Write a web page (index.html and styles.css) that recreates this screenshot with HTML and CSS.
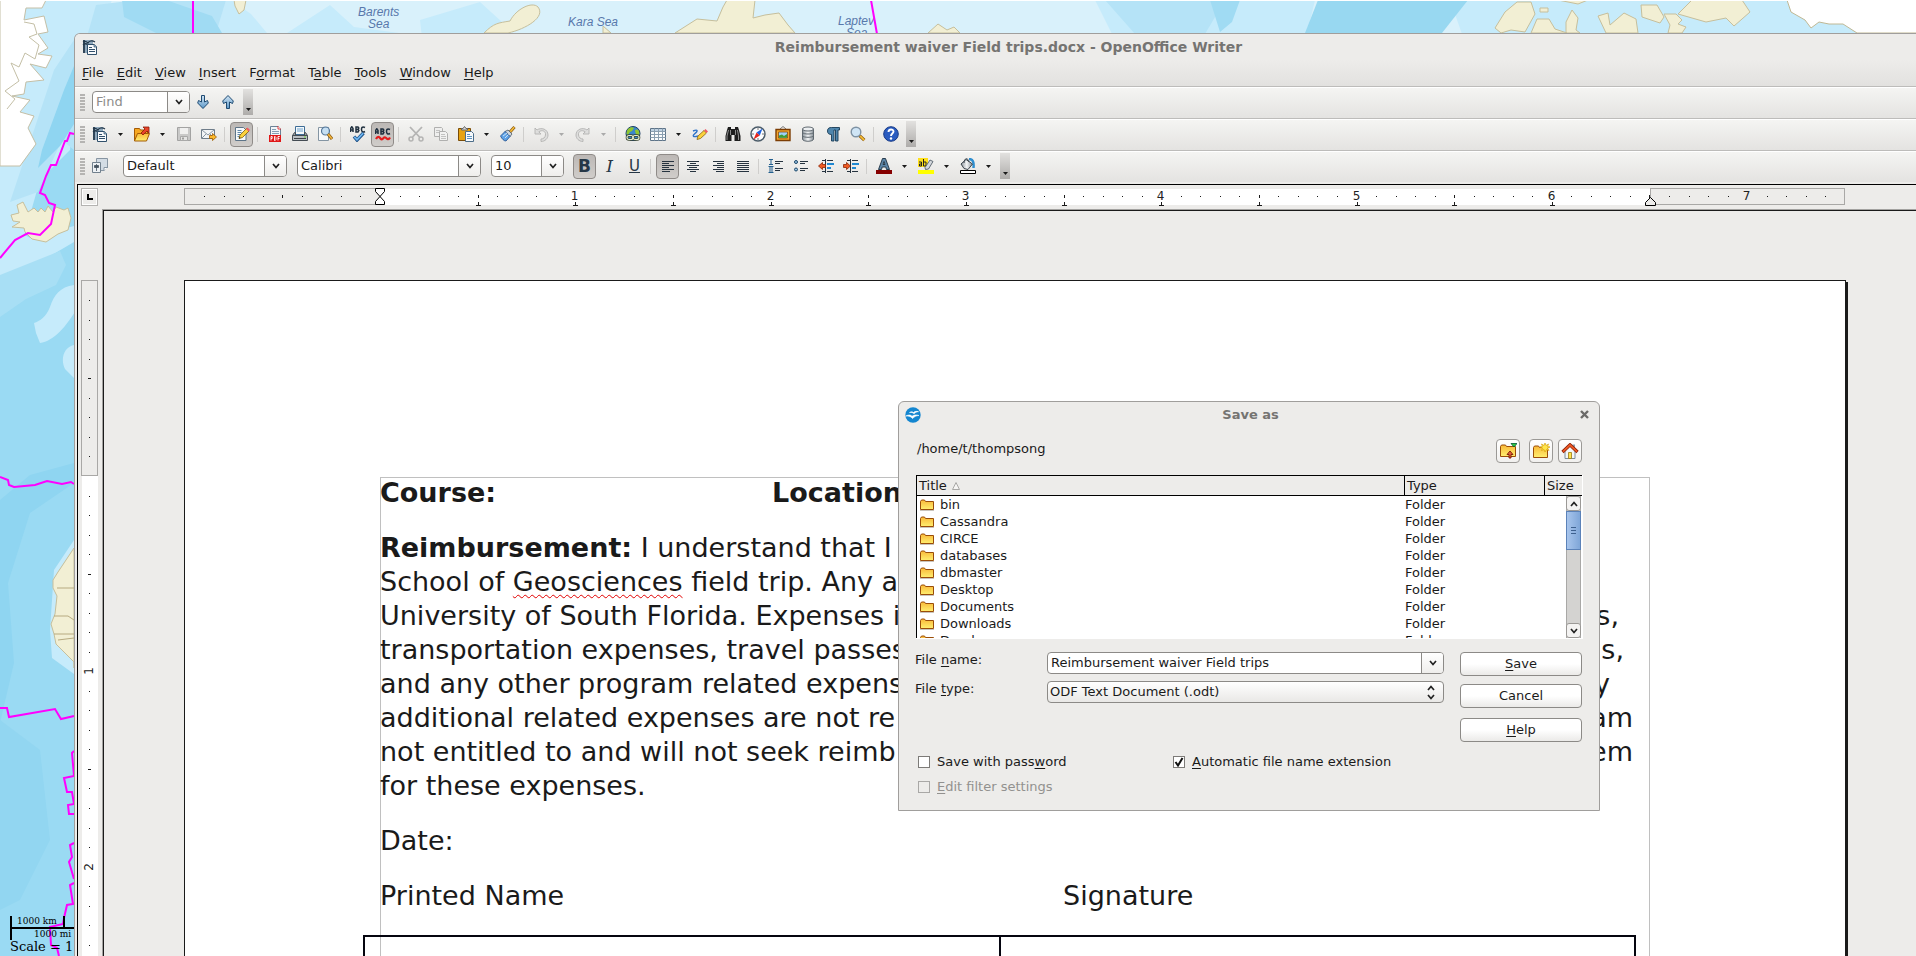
FILE: index.html
```html
<!DOCTYPE html>
<html lang="en">
<head>
<meta charset="utf-8">
<title>Reimbursement waiver Field trips.docx - OpenOffice Writer</title>
<link rel="stylesheet" href="styles.css">
</head>
<body>

<svg class="symbols" aria-hidden="true">
  <defs>
    <linearGradient id="g-blue" x1="0" y1="0" x2="0" y2="1"><stop offset="0" stop-color="#d3e6f5"/><stop offset="1" stop-color="#5b97c8"/></linearGradient>
    <linearGradient id="g-fold" x1="0" y1="0" x2="0" y2="1"><stop offset="0" stop-color="#f9b838"/><stop offset="1" stop-color="#ffef70"/></linearGradient>
    <linearGradient id="g-steel" x1="0" y1="0" x2="1" y2="0"><stop offset="0" stop-color="#8a939a"/><stop offset=".5" stop-color="#f4f6f7"/><stop offset="1" stop-color="#868f96"/></linearGradient>
  </defs>
  <symbol id="i-writer" viewBox="0 0 16 16"><path d="M1 1h2v13H1z" fill="#31475a"/><path d="M3 1h8v4H6v9H3z" fill="#8fa9bd"/><path d="M1 3c3-2 4 0 5 1 1-2 4-3 7-1M1 6c2-2 4-1 5 0" fill="none" stroke="#24394b" stroke-width="1.200"/><path d="M5.500 5.500h7l2 2v8h-9z" fill="#f8fafc" stroke="#31506b"/><path d="M7 8.500h3M7 10.500h6M7 12.500h6" stroke="#31506b"/><path d="M12 5v3h3" fill="#9fb8cc" stroke="#31506b" stroke-width=".7"/></symbol>
  <symbol id="i-open" viewBox="0 0 16 16"><path d="M.5 15V2.500h5l1 1.500h7v3" fill="#f7a821" stroke="#a35a06"/><path d="M.5 15l3-7.500h12l-3 7.500z" fill="url(#g-fold)" stroke="#a35a06"/><path d="M7 7l4-4-2-2h6v6l-2-2-4 4z" fill="#e8442a" stroke="#8a1a06" stroke-width=".8"/></symbol>
  <symbol id="i-save" viewBox="0 0 16 16"><path d="M1.500 1.500h13v13h-13z" fill="#c9c9c8" stroke="#a3a3a2"/><path d="M4 2h8v6H4z" fill="#f0f0ef"/><path d="M4.500 10.500h7v4h-7z" fill="#e4e4e3" stroke="#a9a9a8"/><path d="M6 11.500h2v2H6z" fill="#9d9d9c"/></symbol>
  <symbol id="i-mail" viewBox="0 0 16 16"><path d="M.5 3.500h13v9H.5z" fill="#f2f4f6" stroke="#6f7d8a"/><path d="M1 4l6 5 6-5M1 12l4-4M13 12L9 8" fill="none" stroke="#8b98a4"/><path d="M8.500 9.500h3v-2l4 3.500-4 3.500v-2h-3z" fill="#fdb92a" stroke="#9a5a06" stroke-width=".8"/></symbol>
  <symbol id="i-edit" viewBox="0 0 16 16"><path d="M1.500 1.500h8l2.500 2.500v10.500H1.500z" fill="#f6f9fb" stroke="#5d7488"/><path d="M3.500 4.500h4M3.500 6.500h4M3.500 8.500h3M3.500 10.500h2" stroke="#5f86a8"/><path d="M5 12.500l1-3.500L12.500 2.500l2.500 2.500L8.500 11.500z" fill="#fbd23c" stroke="#7a5a10" stroke-width=".8"/><path d="M12 3l2.500 2.500L16 4 13.500 1.500z" fill="#ef5a67"/><path d="M5 12.500l.5-1.500 1 1z" fill="#111"/></symbol>
  <symbol id="i-pdf" viewBox="0 0 16 16"><path d="M3.500.5h8l2 2v7h-10z" fill="#f2f6f9" stroke="#6b8297"/><path d="M5 3.500h4M5 5.500h7M5 7.500h7" stroke="#86a0b6"/><path d="M2 9h12v7H2z" fill="#e01717"/><path d="M11 0v3h3" fill="#fff" stroke="#e01717" stroke-width=".8"/><path d="M4 14.500v-4h1.200v2H4M7.500 10.500v4h.7l.8-1v-2l-.8-1zM11 14.500v-4h1.800M11 12.500h1.500" fill="none" stroke="#fff" stroke-width=".9"/></symbol>
  <symbol id="i-print" viewBox="0 0 16 16"><path d="M3.500.5h9v8h-9z" fill="#f4f9fc" stroke="#3e6d96"/><path d="M5 3h6M5 5h6" stroke="#6ea2cb"/><path d="M.5 9.500l2-3h1v3h9v-3h1l2 3z" fill="#9aa2a8" stroke="#444c53"/><path d="M.5 9.500h15v5H.5z" fill="#b9bec2" stroke="#444c53"/><path d="M2 12.500h12" stroke="#3b4247"/><path d="M12 10.500h2v1h-2z" fill="#6ad23a"/></symbol>
  <symbol id="i-preview" viewBox="0 0 16 16"><path d="M1.500 1.500h10v13h-10z" fill="#f7f9fb" stroke="#8495a3"/><circle cx="8.500" cy="5" r="4" fill="#bfdcf2" fill-opacity=".9" stroke="#56789a" stroke-width="1.200"/><path d="M11 8l4 5" stroke="#8a5a10" stroke-width="3"/><path d="M11.200 8.200l3.600 4.600" stroke="#f4b53a" stroke-width="1.600"/></symbol>
  <symbol id="i-abc" viewBox="0 0 16 16"><path d="M.5 6V2.500L1.800.7 3 2.500V6M.5 4H3M6 1h2l.8 1-.8 1.300.9 1.300L8 6H6zM6 3.400h2M15 1.500C12 0 11.500 2 11.500 3.500S12.500 7 15 5.500" fill="none" stroke="#20303f" stroke-width="1.500"/></symbol>
  <symbol id="i-spell" viewBox="0 0 16 16"><use href="#i-abc"/><path d="M4 10.500l3 3.500 6.500-7" fill="none" stroke="#1c4f86" stroke-width="3.400"/><path d="M4.300 10.800L7 13.700l6.200-6.500" fill="none" stroke="#6cb4ee" stroke-width="1.700"/></symbol>
  <symbol id="i-auto" viewBox="0 0 16 16"><g transform="translate(0 2)"><use href="#i-abc"/></g><path d="M1 13c1.500-3 3-2.500 4.500-.5s2.500 0 3.500-1 2.500 1 3.500 1.500 2-.5 2.500-1.500" fill="none" stroke="#e21d1d" stroke-width="2.200"/></symbol>
  <symbol id="i-cut" viewBox="0 0 16 16"><path d="M2 1l9.500 10M14 1L4.500 11" stroke="#b4b4b3" stroke-width="1.800"/><circle cx="3" cy="13" r="2" fill="none" stroke="#b4b4b3" stroke-width="1.500"/><circle cx="13" cy="13" r="2" fill="none" stroke="#b4b4b3" stroke-width="1.500"/></symbol>
  <symbol id="i-copy" viewBox="0 0 16 16"><path d="M1.500 1.500h7l1 1v8h-8z" fill="#efefee" stroke="#b0b0af"/><path d="M6.500 5.500h6l2 2v7h-8z" fill="#f2f2f1" stroke="#b0b0af"/><path d="M3 4.500h4M3 6.500h3M8 8.500h4M8 10.500h5M8 12.500h5" stroke="#c2c2c1"/></symbol>
  <symbol id="i-paste" viewBox="0 0 16 16"><path d="M.5 2.500h12v12H.5z" fill="#e7a312" stroke="#7a4d08"/><path d="M3.500 4V2.500h1.500L6.500.5l1.500 2h1.500V4z" fill="#d8dcdf" stroke="#666"/><path d="M7.500 5.500h6l2 2v8h-8z" fill="#f7fafc" stroke="#4c6d89"/><path d="M9 8.500h3M9 10.500h5M9 12.500h5" stroke="#5f93bf"/></symbol>
  <symbol id="i-brush" viewBox="0 0 16 16"><path d="M10 6l4.500-5" stroke="#8a5a10" stroke-width="3"/><path d="M10.300 5.700L14.200 1.300" stroke="#f6bd3a" stroke-width="1.600"/><path d="M8 4l4 4-2 2.500-5-5z" fill="#cfd5da" stroke="#47586a" stroke-width=".8"/><path d="M5 5.500l5 5L6 15c-2 0-4-2-5.500-5z" fill="#5fa2e6" stroke="#1f4c8c" stroke-width=".8"/><path d="M3 10l4-3M5 12l3.500-3.500" stroke="#c9e1f7"/></symbol>
  <symbol id="i-undo" viewBox="0 0 16 16"><path d="M2 2v6h6L5.800 5.800C9 3.500 13 5 12.500 9c-.3 2.500-2 4-4.500 4v2.500c4 0 7-3 7-6.500 0-6-7-8-11-5z" fill="#dededd" stroke="#b3b3b2" stroke-width=".9"/></symbol>
  <symbol id="i-redo" viewBox="0 0 16 16"><g transform="matrix(-1 0 0 1 16 0)"><use href="#i-undo"/></g></symbol>
  <symbol id="i-link" viewBox="0 0 16 16"><circle cx="8" cy="7.500" r="7" fill="#3a86cc" stroke="#1c3f66"/><path d="M3 3c2-2 5-2 6-1L7 5 5 6 3 9 1.500 8c0-2 .5-4 1.500-5zM10 4c2-1 3-.5 4 1l.5 3-2 2-2-3z" fill="#8fc62f"/><rect x="2" y="9.500" width="6" height="4" rx="2" fill="none" stroke="#33402a" stroke-width="2.600"/><rect x="8" y="9.500" width="6" height="4" rx="2" fill="none" stroke="#33402a" stroke-width="2.600"/><rect x="2" y="9.500" width="6" height="4" rx="2" fill="none" stroke="#e4ecd2" stroke-width="1.200"/><rect x="8" y="9.500" width="6" height="4" rx="2" fill="none" stroke="#e4ecd2" stroke-width="1.200"/></symbol>
  <symbol id="i-table" viewBox="0 0 16 16"><path d="M.5 2.500h15v12H.5z" fill="#fafcfd" stroke="#5e7488"/><path d="M1 3h14v2H1z" fill="#bfd2e2"/><path d="M.5 5.500h15M.5 8.500h15M.5 11.500h15M4.500 2.500v12M8.500 2.500v12M12.500 2.500v12" stroke="#8b9fb0"/></symbol>
  <symbol id="i-draw" viewBox="0 0 16 16"><path d="M1 5c5-2 5 0 2 2.500s-2 4 3 2.500" fill="none" stroke="#2f74c9" stroke-width="1.500"/><path d="M5 13.500l1-3.500 6-5.500 2.500 2.500L8.500 12.500z" fill="#fbd23c" stroke="#8a6410" stroke-width=".8"/><path d="M12 4.500l2.500 2.500L16 5.500 13.500 3z" fill="#ef5a67"/></symbol>
  <symbol id="i-bino" viewBox="0 0 16 16"><path d="M3 1h3v2h4V1h3l1 3 1.500 6v5h-6V9h-3v6h-6v-5L2 4z" fill="#1d1d1d"/><path d="M3.500 4L2 10v4M12.500 4l1 6v4M5.500 4v5M10.500 4v5" stroke="#8d8d8d" fill="none"/></symbol>
  <symbol id="i-nav" viewBox="0 0 16 16"><circle cx="8" cy="8" r="7" fill="#fbfcfd" stroke="#4c5c69" stroke-width="1.500"/><path d="M8 2v2M8 12v2M2 8h2M12 8h2" stroke="#777"/><path d="M12.500 2.500L9.800 9.500 6.500 6.500z" fill="#1f63e0"/><path d="M3.500 13.500l3-7 3.300 3z" fill="#e8261c"/></symbol>
  <symbol id="i-gallery" viewBox="0 0 16 16"><path d="M5 3l3-2.500L11 3" fill="none" stroke="#777"/><path d="M1 3.500h14v11H1z" fill="#f2a62a" stroke="#7c3d04" stroke-width="1.400"/><path d="M3.500 6h9v6h-9z" fill="#9fd0f5" stroke="#7c3d04" stroke-width=".7"/><path d="M4 11.800V9.500l3-1 2 1.500 3-2v3.800z" fill="#3f9c34"/></symbol>
  <symbol id="i-db" viewBox="0 0 16 16"><path d="M2.500 3v10c0 3 11 3 11 0V3z" fill="url(#g-steel)" stroke="#606970"/><path d="M2.500 6.500c1 2 10 2 11 0M2.500 9.800c1 2 10 2 11 0" fill="none" stroke="#606970"/><ellipse cx="8" cy="3" rx="5.500" ry="2" fill="#eceff1" stroke="#606970"/></symbol>
  <symbol id="i-para" viewBox="0 0 16 16"><path d="M2.500 5c0-3 2-3.500 4-3.500h8V4H13v11h-2.500V4H9v11H6.500V8.500c-2.500 0-4-1-4-3.500z" fill="#4f86ad" stroke="#173a55" stroke-width=".9"/></symbol>
  <symbol id="i-zoom" viewBox="0 0 16 16"><circle cx="6" cy="6" r="4.800" fill="#cfe5f6" stroke="#7e92a4" stroke-width="1.400"/><path d="M9.800 9.800l4.500 4.400" stroke="#8a5a10" stroke-width="3.200"/><path d="M10.200 10.200l4 3.900" stroke="#f8bf34" stroke-width="1.700"/></symbol>
  <symbol id="i-help" viewBox="0 0 16 16"><circle cx="8" cy="8" r="7.300" fill="#2a5cc0" stroke="#173a86"/><path d="M5.500 6c0-3.300 5-3.200 5-.4C10.500 7.500 8 7.600 8 10" fill="none" stroke="#fff" stroke-width="1.900"/><circle cx="8" cy="12.500" r="1.200" fill="#fff"/></symbol>
  <symbol id="i-styles" viewBox="0 0 16 16"><path d="M4.500.5h11v9l-3 3h-8z" fill="#d3dce4" stroke="#8795a2"/><path d="M12 13V9.500h4" fill="#fff" stroke="#8795a2"/><path d="M.5 4.500h8v10h-8z" fill="#edf1f4" stroke="#71808d"/><path d="M4.500 6v7M2.500 7.500h4v2h-4z" fill="#44525e" stroke="#44525e" stroke-width=".8"/></symbol>
  <symbol id="i-al" viewBox="0 0 16 16"><path d="M2 3.500h12M2 5.500h7M2 7.500h12M2 9.500h7M2 11.500h12M2 13.500h8" stroke="#26333f"/></symbol>
  <symbol id="i-ac" viewBox="0 0 16 16"><path d="M2 3.500h12M5 5.500h6M2 7.500h12M4 9.500h8M2 11.500h12M5 13.500h6" stroke="#26333f"/></symbol>
  <symbol id="i-ar" viewBox="0 0 16 16"><path d="M3 3.500h11M7 5.500h7M3 7.500h11M7 9.500h7M3 11.500h11M6 13.500h8" stroke="#26333f"/></symbol>
  <symbol id="i-aj" viewBox="0 0 16 16"><path d="M2 3.500h12M2 5.500h12M2 7.500h12M2 9.500h12M2 11.500h12M2 13.500h12" stroke="#26333f"/></symbol>
  <symbol id="i-num" viewBox="0 0 16 16"><path d="M1 1.500h4M3 2v4M1 6.500h4M.5 8.500h5M2 9v5M4 9v5M.5 14.500h5" stroke="#24608f"/><path d="M7 3.500h8M7 5.500h5M7 10.500h8M7 12.500h5" stroke="#26333f"/></symbol>
  <symbol id="i-bul" viewBox="0 0 16 16"><circle cx="3" cy="4" r="1.500" fill="#9cc6e4" stroke="#1d486b"/><circle cx="3" cy="11.500" r="1.500" fill="#9cc6e4" stroke="#1d486b"/><path d="M7 3.500h8M7 5.500h5M7 10.500h8M7 12.500h5" stroke="#26333f"/></symbol>
  <symbol id="i-dec" viewBox="0 0 16 16"><path d="M4 2.500h3M9 2.500h6M4 13.500h3M9 13.500h6M7.500 1v14" stroke="#26333f"/><path d="M9 5h7v2H9zM9 9h4v2H9z" fill="#1f88d2"/><path d="M.5 8l4-3.500v2h3v3h-3v2z" fill="#ef5a22" stroke="#8c2606" stroke-width=".8"/></symbol>
  <symbol id="i-inc" viewBox="0 0 16 16"><path d="M4 2.500h3M9 2.500h6M4 13.500h3M9 13.500h6M7.500 1v14" stroke="#26333f"/><path d="M9 5h7v2H9zM9 9h4v2H9z" fill="#1f88d2"/><path d="M7.500 8l-4-3.500v2h-3v3h3v2z" fill="#ef5a22" stroke="#8c2606" stroke-width=".8"/></symbol>
  <symbol id="i-fcol" viewBox="0 0 16 16"><path d="M2.500 11.500L6.500.5h3l4 11h-3l-.7-2.500H6.200l-.7 2.500zM7 6.500h2L8 3.500z" fill="#5d86a8" stroke="#1c2f40" stroke-width=".9"/><path d="M0 12h16v4H0z" fill="#860000"/></symbol>
  <symbol id="i-hl" viewBox="0 0 16 16"><path d="M0 0h10v9H0z" fill="#ffe11a"/><path d="M1 4h2.500v4H1.500V6h2M5.500 1v7h2.500V4H5.500" fill="none" stroke="#222"/><path d="M7 9.500l5-7.500 3 1.500-4.500 7.500-3 .5z" fill="#d4d8dc" stroke="#55606a" stroke-width=".9"/><path d="M0 12h16v4H0z" fill="#ffff00"/></symbol>
  <symbol id="i-bg" viewBox="0 0 16 16"><path d="M9 1c4 0 5 3 4.500 9" fill="none" stroke="#2f8fd0" stroke-width="2.500"/><path d="M1 6l5-4.500L12.500 6 8 11.500 4 10.500z" fill="url(#g-steel)" stroke="#3a444d"/><path d="M4 5c0-5 4-6 5-1" fill="none" stroke="#3a444d"/><path d="M.5 12.500h15v3H.5z" fill="#fff" stroke="#000"/></symbol>
  <symbol id="i-down" viewBox="0 0 16 16"><path d="M6.500 1.500h3V8l3-1.500.8 2.500L8 14.500 2.700 9l.8-2.500 3 1.500z" fill="url(#g-blue)" stroke="#1f4b72"/></symbol>
  <symbol id="i-up" viewBox="0 0 16 16"><path d="M6.500 14.500h3V8l3 1.500.8-2.500L8 1.500 2.700 7l.8 2.500 3-1.500z" fill="url(#g-blue)" stroke="#1f4b72"/></symbol>
  <symbol id="i-folder" viewBox="0 0 14 12"><path d="M.5 10.500v-8l1-1.500h3l1 1.500h8v8z" fill="url(#g-fold)" stroke="#9a4d08"/><path d="M0 11.500h14" stroke="#c9c4bd"/></symbol>
  <symbol id="i-levelup" viewBox="0 0 18 16"><path d="M1.500 13.500V3.500l1-1.500h4l1 1.500h9v10z" fill="url(#g-fold)" stroke="#9a4d08"/><path d="M10 15v-3.500H8l3-3.500 3 3.500h-2V15z" fill="#e2603a" stroke="#7a1a06" stroke-width=".9"/><path d="M12 .5h6l-3 3.500z" fill="#2ecc40" stroke="#053" stroke-width=".8"/></symbol>
  <symbol id="i-newdir" viewBox="0 0 18 16"><path d="M1.500 14.500V4.500l1-1.500h4l1 1.500h8v10z" fill="url(#g-fold)" stroke="#9a4d08"/><path d="M13 0l1 2.500L16.500 1l-1 2.500 2.500.5-2.500 1 1.500 2.500-2.500-1L13 9l-1-2.500-2.500 1 1-2.500L8 4l2.500-.5L9.500 1 12 2.500z" fill="#ffe54a" stroke="#d8a40c" stroke-width=".7"/></symbol>
  <symbol id="i-home" viewBox="0 0 18 16"><path d="M11.500 1.500h2.500v4h-2.500z" fill="#8fa1b2"/><path d="M4 8l5-5 5 5v7.500H4z" fill="#f3f6f9" stroke="#7d8c9a"/><path d="M7.500 9.500h3v6h-3z" fill="#ffe34d" stroke="#9a7a10" stroke-width=".8"/><path d="M1.500 9L9 1.800 16.500 9" fill="none" stroke="#8c1f06" stroke-width="3.200"/><path d="M2 8.600L9 1.900 16 8.600" fill="none" stroke="#f05a25" stroke-width="1.800"/></symbol>
  <symbol id="i-oo" viewBox="0 0 16 16"><circle cx="8" cy="8" r="7.700" fill="#1486d0"/><path d="M4.500 5.500c2-1.200 3-.8 4 0 1-1 3-1.500 5-.8-2 0-3.200.8-4.500 2C7.800 5.600 6.500 5.200 4.500 5.500zM.8 9c3-1.500 5-1.200 6.200.3 1.500-1.300 4-1.800 7-.8-3 .1-4.500 1.200-6.500 3C6 9.500 4 8.700.8 9z" fill="#fff" stroke="#fff" stroke-width=".6"/></symbol>
  <symbol id="i-chev" viewBox="0 0 8 6"><path d="M1 1l3 3.500L7 1" fill="none" stroke="#222" stroke-width="1.700"/></symbol>
  <symbol id="i-chevup" viewBox="0 0 8 6"><path d="M1 5l3-3.500L7 5" fill="none" stroke="#222" stroke-width="1.700"/></symbol>
  <symbol id="i-tri" viewBox="0 0 5 3"><path d="M0 0h5L2.500 3z" fill="currentColor"/></symbol>
</svg>

<svg class="map" role="img" aria-label="World map">
  <rect width="100%" height="100%" fill="#9adaf3"/>
  <rect width="100%" height="40" fill="#d9f1fb"/>
  <g fill="#c6ebfb">
    <path d="M0 0h112l-6 16 8 17-34 6L70 150 40 180 20 250 0 300z"/>
    <path d="M205 0h26l20 14 16 19h-64l-4-20zM330 5l24 22 60 8-50 4-80-4zM420 20l60-18 22 20-20 14-60 2z"/>
    <path d="M1095 0h220l-8 34h-195zM1450 0h466v34H1462z"/>
    <path d="M74 285c-14 2-20 10-24 22-4 10-10 14-16 16l2 10 4 10c14-2 26-16 38-36zM74 345c-10 2-14 14-9 24l9 9zM74 540l-20 30-4 60 2 28 22 16z"/>
    <path d="M0 220l30 18 44-12v16L40 262 12 274 0 270z"/>
  </g>
  <g fill="#b5e3f7">
    <path d="M54 70l20-30v110l-12-10-24 52-28 10 20-60zM1105 0h120l-20 34h-70z"/>
    <path d="M96 5l40-5h90l-10 33H88z"/>
  </g>
  <path d="M0 275l60-24 6 14-10 20-30 14-26 18z" fill="#a8dff5"/>
  <path d="M122 0h44l46 16 10 17h-66l-32-16zM1210 0h30l-8 22-12 10z" fill="#a0dbf3"/>
  <path d="M1318 0h150l-26 33H1305z" fill="#98d8f1"/>
  <path d="M64 90l10-24v58l-14 22-22 22 4-18zM0 500l30-25 44-12v20l-44 30-22 70 6 80-14 60z" fill="#8fd5f1"/>
  <path d="M0 720l40 30 10 90-30 60-20 10z" fill="#92d6f1"/>
  <path d="M0 0h46l-4 8-16 0-2 12 20-4 4 16-10 2 10 14-10 6 14 2-6 12-16-4 14 16-18 2-2 12-12 2 18 4-10 12 14 4-6 12 8 16-16 22L0 166z" fill="#fff" stroke="#c4bfa6"/>
  <path d="M24 22l10 2 3 10-8 3 10 8-4 14-10-6-6 14-8-4 8 18-14 10 10 8-8 10" fill="none" stroke="#c4bfa6"/>
  <g fill="#f2efd4" stroke="#c6bf9c">
    <path d="M11 215l8-2-2-8 6-3 5 10 6-4 4 4 3-4 4 4 3-6 5 6 3-5 8 3 4-2 3 10-3 12-10 4-12 8-14-3-7-7-1-4-12-1 8-5-7-1z"/>
    <path d="M74 548l-8 12-8 12-5 8 0 8 4 8-2 18-4 10 3 10 2 10 8 8 10 10v6z"/>
    <path d="M234 0h12l-2 10-5 4-4-8zM484 33c10-10 14-10 26-12 6-12 22-20 28-14 8 10-12 22-30 26zM611 33l-8-7v7z"/>
    <path d="M675 33l22-14 20 2 6-14 4-7h28l-2 18 12-3 14-2 9 12 7 8z"/>
    <path d="M928 33l10-9 9 6 7-3 6 6zM1495 28l10-16 12-10h14l4 12-10 18-14-2-10 3zM1531 33l6-14 12 0 6 10 12 4zM1566 22l6-12 6 8-2 12 4 3h-14z"/>
    <path d="M1598 16l10-3 2 12 14-12 12 6 2 14h-32zM1641 5l16 0 7 12-4 6-18-6zM1664 14l12 0 6 6-4 4 8 3-4 6h-14l2-8zM1678 14l14-14h50l8 12-16 14-8-8-20 4z"/>
    <path d="M1540 8h8v4h-8zM1558 0h30l-10 4z"/>
  </g>
  <path d="M57 588h17M54 616l14 0 6 4M54 634h20M58 640l16-2" fill="none" stroke="#b7aa80"/>
  <path d="M1787 0l4 12 14 8 6 8 8-6 10 2 14 0 14 9h69V0z" fill="#fff" stroke="#c0b894"/>
  <g class="sea-label">
    <text x="358" y="16">Barents</text><text x="368" y="28">Sea</text>
    <text x="568" y="26">Kara Sea</text>
    <text x="838" y="25">Laptev</text><text x="846" y="37">Sea</text>
  </g>
  <path d="M193 0v34M871 0l6 34M74 134l-4-1-3 8h-2l-9 24h-5l-5 11-6 17 5 2 4 8 6 2-4 19-11 11-12-2-13 7L0 258M0 477l8 3 1 5 5 2 21-2 12-4 15 3 9-2 3 2M0 708h7l2 9 46-8 6 10 13-3M74 751l-2 2 2 23-10 2 3 14h5l2 12-6 1 1 9 5 0M74 843l-4 2 2 12-3 5 5 17M74 883l-4 2 3 19-6 1-3 13-1 6-13 3 1 18 6 3 2 8" fill="none" stroke="#f0f" stroke-width="2"/>
  <path d="M11 916v24M11 928h63M64 916v12" fill="none" stroke="#000" stroke-width="2"/>
  <g class="scale-label"><text x="17" y="924">1000 km</text><text x="34" y="937">1000 mi</text><text class="big" x="10" y="951">Scale = 1:</text></g>
  <rect width="100%" height="1" fill="#fff"/>
</svg>

<main class="window">
  <header class="head">
    <div class="titlebar"><svg class="icon"><use href="#i-writer"/></svg><h1>Reimbursement waiver Field trips.docx - OpenOffice Writer</h1></div>
    <nav class="menubar">
      <button><u>F</u>ile</button><button><u>E</u>dit</button><button><u>V</u>iew</button><button><u>I</u>nsert</button><button>F<u>o</u>rmat</button><button>T<u>a</u>ble</button><button><u>T</u>ools</button><button><u>W</u>indow</button><button><u>H</u>elp</button>
    </nav>
  </header>

  <div class="toolbar">
    <span class="grip"></span>
    <div class="combo find"><input type="text" placeholder="Find" aria-label="Find"><button aria-label="Find history"><svg><use href="#i-chev"/></svg></button></div>
    <button class="tool" aria-label="Find next"><svg class="icon"><use href="#i-down"/></svg></button>
    <button class="tool" aria-label="Find previous"><svg class="icon"><use href="#i-up"/></svg></button>
    <button class="more" aria-label="More"><svg><use href="#i-tri"/></svg></button>
  </div>

  <div class="toolbar">
    <span class="grip"></span>
    <button class="tool" aria-label="New"><svg class="icon"><use href="#i-writer"/></svg></button><button class="drop" aria-label="New options"><svg><use href="#i-tri"/></svg></button>
    <button class="tool" aria-label="Open"><svg class="icon"><use href="#i-open"/></svg></button><button class="drop" aria-label="Open options"><svg><use href="#i-tri"/></svg></button>
    <button class="tool" aria-label="Save" disabled><svg class="icon"><use href="#i-save"/></svg></button>
    <button class="tool" aria-label="E-mail"><svg class="icon"><use href="#i-mail"/></svg></button>
    <i class="sep"></i>
    <button class="tool on" aria-label="Edit file"><svg class="icon"><use href="#i-edit"/></svg></button>
    <i class="sep"></i>
    <button class="tool" aria-label="Export as PDF"><svg class="icon"><use href="#i-pdf"/></svg></button>
    <button class="tool" aria-label="Print"><svg class="icon"><use href="#i-print"/></svg></button>
    <button class="tool" aria-label="Page preview"><svg class="icon"><use href="#i-preview"/></svg></button>
    <i class="sep"></i>
    <button class="tool" aria-label="Spelling"><svg class="icon"><use href="#i-spell"/></svg></button>
    <button class="tool on" aria-label="AutoSpellcheck"><svg class="icon"><use href="#i-auto"/></svg></button>
    <i class="sep"></i>
    <button class="tool" aria-label="Cut" disabled><svg class="icon"><use href="#i-cut"/></svg></button>
    <button class="tool" aria-label="Copy" disabled><svg class="icon"><use href="#i-copy"/></svg></button>
    <button class="tool" aria-label="Paste"><svg class="icon"><use href="#i-paste"/></svg></button><button class="drop" aria-label="Paste options"><svg><use href="#i-tri"/></svg></button>
    <button class="tool" aria-label="Format paintbrush"><svg class="icon"><use href="#i-brush"/></svg></button>
    <i class="sep"></i>
    <button class="tool" aria-label="Undo" disabled><svg class="icon"><use href="#i-undo"/></svg></button><button class="drop" aria-label="Undo options" disabled><svg><use href="#i-tri"/></svg></button>
    <button class="tool" aria-label="Redo" disabled><svg class="icon"><use href="#i-redo"/></svg></button><button class="drop" aria-label="Redo options" disabled><svg><use href="#i-tri"/></svg></button>
    <i class="sep"></i>
    <button class="tool" aria-label="Hyperlink"><svg class="icon"><use href="#i-link"/></svg></button>
    <button class="tool" aria-label="Table"><svg class="icon"><use href="#i-table"/></svg></button><button class="drop" aria-label="Table options"><svg><use href="#i-tri"/></svg></button>
    <button class="tool" aria-label="Draw functions"><svg class="icon"><use href="#i-draw"/></svg></button>
    <i class="sep"></i>
    <button class="tool" aria-label="Find and replace"><svg class="icon"><use href="#i-bino"/></svg></button>
    <button class="tool" aria-label="Navigator"><svg class="icon"><use href="#i-nav"/></svg></button>
    <button class="tool" aria-label="Gallery"><svg class="icon"><use href="#i-gallery"/></svg></button>
    <button class="tool" aria-label="Data sources"><svg class="icon"><use href="#i-db"/></svg></button>
    <button class="tool" aria-label="Nonprinting characters"><svg class="icon"><use href="#i-para"/></svg></button>
    <button class="tool" aria-label="Zoom"><svg class="icon"><use href="#i-zoom"/></svg></button>
    <i class="sep"></i>
    <button class="tool" aria-label="Help"><svg class="icon"><use href="#i-help"/></svg></button>
    <button class="more" aria-label="More"><svg><use href="#i-tri"/></svg></button>
  </div>

  <div class="toolbar">
    <span class="grip"></span>
    <button class="tool" aria-label="Styles and formatting"><svg class="icon"><use href="#i-styles"/></svg></button>
    <div class="combo style"><input type="text" value="Default" aria-label="Style"><button aria-label="Styles"><svg><use href="#i-chev"/></svg></button></div>
    <div class="combo font"><input type="text" value="Calibri" aria-label="Font name"><button aria-label="Fonts"><svg><use href="#i-chev"/></svg></button></div>
    <div class="combo size"><input type="text" value="10" aria-label="Font size"><button aria-label="Sizes"><svg><use href="#i-chev"/></svg></button></div>
    <button class="tool on glyph bold" aria-label="Bold">B</button>
    <button class="tool glyph italic" aria-label="Italic">I</button>
    <button class="tool glyph under" aria-label="Underline">U</button>
    <i class="sep"></i>
    <button class="tool on" aria-label="Align left"><svg class="icon"><use href="#i-al"/></svg></button>
    <button class="tool" aria-label="Center"><svg class="icon"><use href="#i-ac"/></svg></button>
    <button class="tool" aria-label="Align right"><svg class="icon"><use href="#i-ar"/></svg></button>
    <button class="tool" aria-label="Justify"><svg class="icon"><use href="#i-aj"/></svg></button>
    <i class="sep"></i>
    <button class="tool" aria-label="Numbering"><svg class="icon"><use href="#i-num"/></svg></button>
    <button class="tool" aria-label="Bullets"><svg class="icon"><use href="#i-bul"/></svg></button>
    <button class="tool" aria-label="Decrease indent"><svg class="icon"><use href="#i-dec"/></svg></button>
    <button class="tool" aria-label="Increase indent"><svg class="icon"><use href="#i-inc"/></svg></button>
    <i class="sep"></i>
    <button class="tool" aria-label="Font color"><svg class="icon"><use href="#i-fcol"/></svg></button><button class="drop" aria-label="Font colors"><svg><use href="#i-tri"/></svg></button>
    <button class="tool" aria-label="Highlighting"><svg class="icon"><use href="#i-hl"/></svg></button><button class="drop" aria-label="Highlight colors"><svg><use href="#i-tri"/></svg></button>
    <button class="tool" aria-label="Background color"><svg class="icon"><use href="#i-bg"/></svg></button><button class="drop" aria-label="Background colors"><svg><use href="#i-tri"/></svg></button>
    <button class="more" aria-label="More"><svg><use href="#i-tri"/></svg></button>
  </div>

  <div class="work">
    <button class="tabstop" aria-label="Tab stop type"><svg viewBox="0 0 6 6"><path d="M1 0v5h5" fill="none" stroke="#000" stroke-width="2"/></svg></button>
    <svg class="hruler" id="hruler"></svg>
    <svg class="vruler" id="vruler"></svg>
    <div class="editor">
      <article class="page">
        <div class="body">
          <p class="course"><b>Course:</b><b>Location:</b></p>
          <div class="para">
            <p><span><b>Reimbursement:</b> I understand that I am</span></p>
            <p><span>School of <span class="misspelt">Geosciences</span> field trip. Any a</span></p>
            <p><span>University of South Florida. Expenses in</span><span class="tail t3">s,</span></p>
            <p><span>transportation expenses, travel passes</span><span class="tail t2">s,</span></p>
            <p><span>and any other program related expens</span><span class="tail t4">y</span></p>
            <p><span>additional related expenses are not re</span><span class="tail">am</span></p>
            <p><span>not entitled to and will not seek reimb</span><span class="tail">em</span></p>
            <p><span>for these expenses.</span></p>
          </div>
          <p class="date">Date:</p>
          <p class="sign"><span>Printed Name</span><span>Signature</span></p>
          <table class="names"><tr><td></td><td></td></tr></table>
        </div>
      </article>
    </div>
  </div>
</main>

<section class="dialog" role="dialog" aria-labelledby="dlg-title">
  <div class="dlg-bar"><svg class="icon"><use href="#i-oo"/></svg><h2 id="dlg-title">Save as</h2><button class="close" aria-label="Close"><svg viewBox="0 0 9 9"><path d="M1 1l7 7M8 1L1 8" stroke="#6c6b69" stroke-width="2.400"/></svg></button></div>
  <div class="dlg-path">
    <span>/home/t/thompsong</span>
    <button aria-label="Up one level"><svg><use href="#i-levelup"/></svg></button>
    <button aria-label="Create new directory"><svg><use href="#i-newdir"/></svg></button>
    <button aria-label="Home"><svg><use href="#i-home"/></svg></button>
  </div>
  <div class="files">
    <table>
      <colgroup><col><col class="c-type"><col class="c-size"></colgroup>
      <thead><tr><th>Title <svg class="sort" viewBox="0 0 8 8"><path d="M.5 7.500L4 .5l3.500 7z" fill="#f6f5f4" stroke="#a9a8a6"/></svg></th><th>Type</th><th>Size</th></tr></thead>
      <tbody>
        <tr><td><svg><use href="#i-folder"/></svg>bin</td><td>Folder</td><td></td></tr>
        <tr><td><svg><use href="#i-folder"/></svg>Cassandra</td><td>Folder</td><td></td></tr>
        <tr><td><svg><use href="#i-folder"/></svg>CIRCE</td><td>Folder</td><td></td></tr>
        <tr><td><svg><use href="#i-folder"/></svg>databases</td><td>Folder</td><td></td></tr>
        <tr><td><svg><use href="#i-folder"/></svg>dbmaster</td><td>Folder</td><td></td></tr>
        <tr><td><svg><use href="#i-folder"/></svg>Desktop</td><td>Folder</td><td></td></tr>
        <tr><td><svg><use href="#i-folder"/></svg>Documents</td><td>Folder</td><td></td></tr>
        <tr><td><svg><use href="#i-folder"/></svg>Downloads</td><td>Folder</td><td></td></tr>
        <tr><td><svg><use href="#i-folder"/></svg>Dropbox</td><td>Folder</td><td></td></tr>
      </tbody>
    </table>
    <div class="scroll">
      <button aria-label="Scroll up"><svg><use href="#i-chevup"/></svg></button>
      <div class="thumb"></div>
      <button class="last" aria-label="Scroll down"><svg><use href="#i-chev"/></svg></button>
    </div>
  </div>
  <div class="form">
    <div class="fields">
      <label for="fname">File <u>n</u>ame:</label>
      <div class="combo"><input id="fname" type="text" value="Reimbursement waiver Field trips"><button aria-label="Recent names"><svg><use href="#i-chev"/></svg></button></div>
      <label for="ftype">File <u>t</u>ype:</label>
      <div class="choice"><select id="ftype"><option>ODF Text Document (.odt)</option></select><span><svg><use href="#i-chevup"/></svg><svg><use href="#i-chev"/></svg></span></div>
    </div>
    <div class="actions"><button><span><u>S</u>ave</span></button><button><span>Cancel</span></button><button class="help"><span><u>H</u>elp</span></button></div>
  </div>
  <div class="checks">
    <label><input type="checkbox"><span>Save with pass<u>w</u>ord</span></label>
    <label><input type="checkbox" checked><span><u>A</u>utomatic file name extension</span></label>
    <label class="off"><input type="checkbox" disabled><span><u>E</u>dit filter settings</span></label>
  </div>
</section>

<script src="ruler.js"></script>
</body>
</html>
```
FILE: styles.css
```css
* { box-sizing: border-box; }

html, body { height: 100%; }

body {
  margin: 0;
  position: relative;
  overflow: hidden;
  font: 13px/16px "DejaVu Sans", sans-serif;
  color: #1a1a1a;
  background: #9adaf3;
}

button, input, select { font: inherit; color: inherit; margin: 0; padding: 0; }
button { border: 0; background: none; }
h1, h2, p { margin: 0; }
svg { display: block; flex: none; }
u { text-decoration-thickness: 1px; text-underline-offset: 2px; text-decoration-skip-ink: none; }

.symbols { position: absolute; width: 0; height: 0; }
.icon { width: 16px; height: 16px; }

/* Desktop map */
.map { position: absolute; inset: 0; width: 100%; height: 100%; }
.sea-label { font: italic 12px "Liberation Sans", sans-serif; fill: #5878ab; }
.scale-label { font: 9px "DejaVu Serif", serif; }
.scale-label .big { font-size: 13px; }

/* Writer window; its right edge runs off the screen */
.window {
  position: absolute;
  inset: 33px -27px 0 74px;
  display: flex;
  flex-direction: column;
  border: 1px solid #a09e9c;
  border-width: 1px 1px 0;
  border-radius: 6px 6px 0 0;
  background: #edecea;
  overflow: hidden;
}

.head { height: 52px; background: linear-gradient(#edecea 50%, #e2e1df); }
.titlebar { display: flex; align-items: center; height: 25px; padding: 0 23px 0 7px; }
.titlebar h1, .dlg-bar h2 { flex: 1; text-align: center; font-size: 14px; font-weight: bold; color: #757472; }
.dlg-bar h2 { font-size: 13px; }
.menubar { display: flex; gap: 1px; padding: 6px 1px; }
.menubar button { padding: 0 6px; }

/* Toolbars */
.toolbar {
  display: flex;
  align-items: center;
  height: 32px;
  flex: none;
  padding: 0 0 1px 5px;
  border-top: 1px solid #bdbcba;
  box-shadow: inset 0 1px #fff;
  background: linear-gradient(#f5f5f3, #e4e3e1);
}
.grip {
  width: 5px;
  height: 17px;
  margin-right: 2px;
  background: radial-gradient(circle at 1px 1px, #b5b4b2 1px, transparent 1px) 0 0 / 2px 3px;
}
.tool { width: 23px; height: 25px; margin: 0 1px; display: flex; align-items: center; justify-content: center; border-radius: 4px; }
.tool.on { border: 1px solid #8f8b88; background: linear-gradient(#bcb8b5, #d0cdca); }
.drop { width: 17px; height: 25px; display: flex; align-items: center; justify-content: center; }
.drop svg, .more svg { width: 5px; height: 3px; }
.drop:disabled { color: #aaa; }
.sep { width: 1px; height: 15px; margin: 0 4px 0 3px; background: #cfcecc; }
.more { width: 10px; height: 26px; display: flex; align-items: flex-end; justify-content: center; padding-bottom: 4px; margin-left: 3px; background: linear-gradient(#e2e1df, #aeacaa); }
.glyph { font-size: 17px; color: #263746; }
.glyph.bold { font-weight: bold; }
.glyph.italic { font-family: "DejaVu Serif", serif; font-style: italic; }
.glyph.under { text-decoration: underline; font-size: 15px; }

.combo { display: flex; height: 22px; border: 1px solid #8c8a87; border-radius: 4px; background: #fff; overflow: hidden; }
.combo input { flex: 1; min-width: 0; border: 0; outline: 0; padding: 0 3px; background: none; }
.combo input::placeholder { color: #8d8d8b; opacity: 1; }
.combo button { width: 22px; display: flex; align-items: center; justify-content: center; border-left: 1px solid #8c8a87; background: linear-gradient(#fff, #efeeec); }
.combo svg, .choice svg, .scroll svg { width: 8px; height: 6px; }
.find { width: 98px; margin-left: 5px; }
.style { width: 164px; margin: 0 10px 0 11px; }
.font { width: 184px; margin-right: 10px; }
.size { width: 73px; margin-right: 8px; }

/* Rulers and editing area */
.work {
  flex: 1;
  min-height: 0;
  display: grid;
  grid-template: 24px 1fr / 24px 1fr;
  margin: 2px 0 0 2px;
  border: solid #000;
  border-width: 1px 0 0 1px;
}
.tabstop { margin: 3px 4px 3px 3px; border: 1px solid #b4b3b1; box-shadow: inset 0 0 0 1px #fff; display: flex; align-items: center; justify-content: center; }
.tabstop svg { width: 6px; height: 6px; }
.hruler, .vruler { width: 100%; height: 100%; }
.hruler text, .vruler text { font: 12px "DejaVu Sans", sans-serif; text-anchor: middle; fill: #222; }
.editor { min-height: 0; overflow: hidden; border: solid #a3a2a0; border-width: 1px 0 0 1px; box-shadow: inset 1px 1px #1a1a1a; padding: 70px 96px 0 81px; }

.page {
  height: 2145px;
  padding: 196px 195px 0;
  border: 1px solid #1a1a1a;
  background: #fff;
  box-shadow: 2px 2px #1a1a1a;
  font-size: 27px;
  line-height: 34px;
}
.body { height: 1700px; box-shadow: inset 0 0 0 1px #c0c0c0; white-space: nowrap; }
.course { display: grid; grid-template-columns: 392px 1fr; line-height: 32px; margin-bottom: 22px; }
.para p { display: flex; justify-content: space-between; }
.tail { padding-right: 17px; }
.tail.t2 { padding-right: 26px; }
.tail.t3 { padding-right: 31px; }
.tail.t4 { padding-right: 40px; }
.misspelt { text-decoration: underline wavy #e00000 1px; text-underline-offset: 3px; text-decoration-skip-ink: none; }
.date { margin: 21px 0; }
.sign { display: grid; grid-template-columns: 683px 1fr; margin-bottom: 22px; }
.names { width: calc(100% + 3px); margin-left: -17px; border-collapse: collapse; table-layout: fixed; }
.names td { height: 160px; border: 2px solid #05050f; }

/* Save as dialog */
.dialog {
  position: absolute;
  left: 898px;
  top: 401px;
  width: 702px;
  padding-bottom: 15px;
  border: 1px solid #a09e9c;
  border-radius: 6px 6px 0 0;
  background: #edecea;
}
.dlg-bar { display: flex; align-items: center; height: 25px; padding: 0 10px 0 6px; }
.close svg { width: 9px; height: 9px; }
.dlg-path { display: flex; align-items: center; height: 24px; margin: 12px 17px 12px 18px; }
.dlg-path span { flex: 1; margin-top: -4px; }
.dlg-path button { width: 24px; height: 24px; margin-left: 5px; display: flex; align-items: center; justify-content: center; border: 1px solid #9b9996; border-radius: 4px; background: linear-gradient(#fff, #f1f0ee); }
.dlg-path span + button { margin-right: 4px; }
.dlg-path svg { width: 18px; height: 16px; }

.files { position: relative; height: 164px; margin: 0 16px 0 17px; overflow: hidden; border: solid #fff; border-width: 0 1px 1px 0; background: #fff; }
.files table { width: 100%; table-layout: fixed; border-collapse: separate; border-spacing: 0; border: solid #000; border-width: 1px 0 0 1px; }
.c-type { width: 140px; }
.c-size { width: 38px; }
.files th { height: 20px; padding: 0 2px; text-align: left; font-weight: normal; line-height: 19px; background: #edecea; border-bottom: 1px solid #000; }
.files th + th { border-left: 1px solid #000; }
.files .sort { display: inline-block; width: 8px; height: 8px; margin-left: 1px; }
.files td { height: 17px; padding: 0 0 0 1px; line-height: 17px; }
.files td:first-child { display: flex; align-items: center; gap: 6px; padding-left: 3px; }
.files td svg { width: 14px; height: 12px; }
.scroll { position: absolute; top: 21px; right: 1px; bottom: 0; width: 15px; display: flex; flex-direction: column; background: #d4d3d1; box-shadow: inset 1px 0 #a9a8a6, inset -1px 0 #a9a8a6; }
.scroll button { height: 15px; display: flex; align-items: center; justify-content: center; border: 1px solid #9b9996; border-radius: 3px; background: #f4f3f2; }
.scroll .last { margin-top: auto; }
.thumb { height: 39px; border: 1px solid #5b82b8; background: repeating-linear-gradient(#3d608f 0 1px, transparent 1px 3px) center / 5px 7px no-repeat, linear-gradient(90deg, #a8c5ec, #7fa6d8); }

.form { display: flex; margin: 13px 17px 0 16px; }
.fields { flex: 1; display: grid; grid-template-columns: 132px 1fr; row-gap: 7px; align-content: start; margin-right: 16px; }
.choice { position: relative; height: 22px; }
.choice select { width: 100%; height: 100%; padding: 0 2px; appearance: none; border: 1px solid #8c8a87; border-radius: 4px; background: linear-gradient(#fff, #e9e8e6); }
.choice span { position: absolute; right: 9px; top: 4px; display: flex; flex-direction: column; gap: 3px; pointer-events: none; }
.actions { width: 122px; display: flex; flex-direction: column; gap: 8px; }
.actions button { height: 24px; border: 1px solid #8c8a87; border-radius: 4px; background: linear-gradient(#fff 50%, #ebeae8); }
.actions .help { margin-top: 2px; }

.checks { display: grid; grid-template-columns: 255px 1fr; row-gap: 9px; margin: 12px 19px 0; }
.checks label { display: flex; align-items: center; gap: 7px; }
.checks input { appearance: none; width: 12px; height: 12px; border: 1px solid #7d7b78; background: #fff; }
.checks input:checked { background: #fff url("data:image/svg+xml,%3Csvg xmlns='http://www.w3.org/2000/svg' viewBox='0 0 10 10'%3E%3Cpath d='M1.500 5L4 8.500 8.500 1' fill='none' stroke='%23111' stroke-width='2'/%3E%3C/svg%3E") center / 10px 10px no-repeat; }
.checks .off { color: #92918f; }
.checks .off input { border-color: #a9a8a6; background: #edecea; }
```
FILE: ruler.js
```js
// Draws both rulers: a dot per tenth of an inch, a tick per half, a number per inch.
const INCH = 195.3;
const LINE = '#a9a8a6';
const INK = '#1a1a1a';

function rect(x, y, w, h, fill) {
  return `<rect x="${x}" y="${y}" width="${w}" height="${h}" fill="${fill}"/>`;
}
function frame(x, y, w, h) {
  return `<rect x="${x + 0.5}" y="${y + 0.5}" width="${w - 1}" height="${h - 1}" fill="#edecea" stroke="${LINE}"/>`;
}

function horizontal() {
  const zero = 278, right = 1548;
  let out = rect(zero, 4, right - zero, 16, '#fff') + frame(82, 3, 197, 17) + frame(right, 3, 195, 17);
  for (let i = -9; i < 75; i++) {
    const x = Math.round(zero + i * INCH / 10);
    if (i % 10 === 0) {
      if (i > 0) out += `<text x="${x - 0.5}" y="15">${i / 10}</text>`;
    } else if (i % 5 === 0) {
      out += rect(x, 10, 1, 3, INK);
    } else {
      out += rect(x, 11, 1, 1, INK);
    }
    if (i > 0 && i < 65 && i % 5 === 0) out += rect(x, 17, 1, 3, INK) + rect(x - 2, 20, 5, 1, INK);
  }
  out += '<path d="M273.500 3.500h9v3l-4.500 5 4.500 5v3h-9v-3l4.500-5-4.500-5z" fill="#fff" stroke="#000"/>';
  out += '<path d="M1543.500 20.500v-3l5-5 5 5v3z" fill="#edecea" stroke="#000"/>';
  return out;
}

function vertical() {
  const zero = 267;
  let out = rect(4, zero, 16, 2000, '#fff') + frame(3, 71, 17, 196);
  for (let i = -9; i < 30; i++) {
    const y = Math.round(zero + i * INCH / 10);
    if (i % 10 === 0) {
      if (i > 0) out += `<text transform="translate(15 ${y}) rotate(-90)">${i / 10}</text>`;
    } else if (i % 5 === 0) {
      out += rect(10, y, 3, 1, INK);
    } else {
      out += rect(11, y, 1, 1, INK);
    }
  }
  return out;
}

document.getElementById('hruler').innerHTML = horizontal();
document.getElementById('vruler').innerHTML = vertical();
```
